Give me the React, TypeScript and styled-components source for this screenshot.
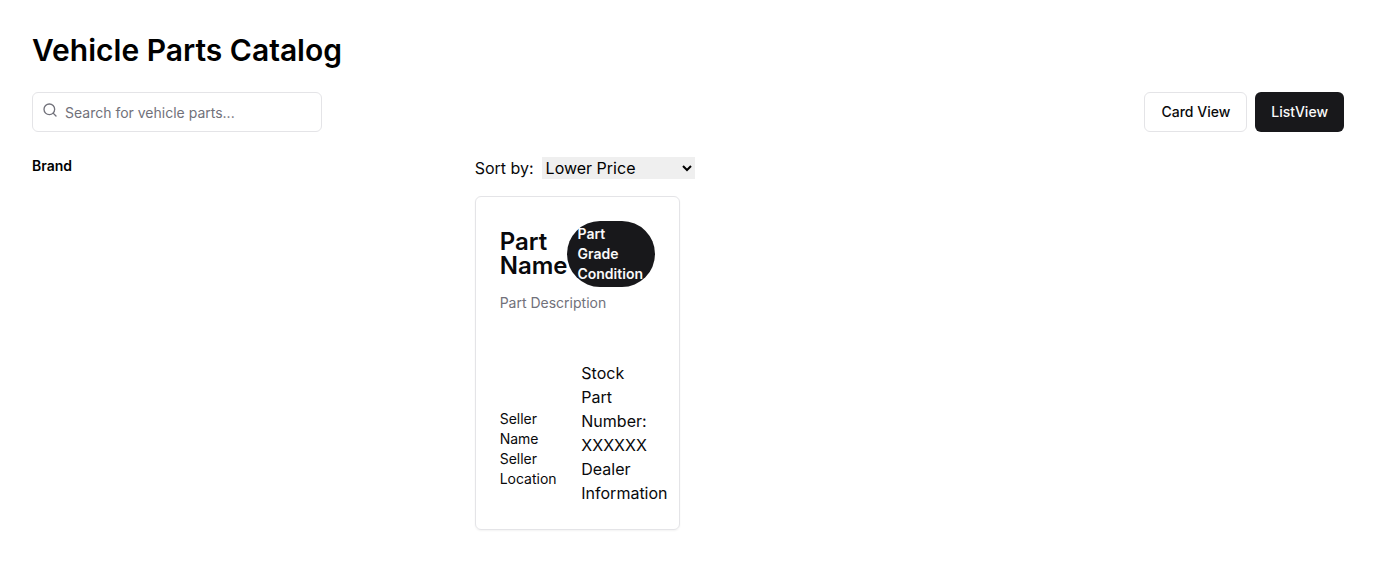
import React, { useState } from "react";
import styled, { createGlobalStyle } from "styled-components";
import { Search } from "lucide-react";

const GlobalStyle = createGlobalStyle`
  *, *::before, *::after { box-sizing: border-box; }
  body {
    margin: 0;
    background: #fff;
    color: #09090b;
    font-family: Inter, "Liberation Sans", sans-serif;
    font-size: 16px;
    line-height: 24px;
  }
  h1, h2, h3, p { margin: 0; }
  button, input, select { font-family: inherit; }
`;

const Page = styled.main`
  padding: 32px;
`;

const PageTitle = styled.h1`
  margin-bottom: 24px;
  color: #000;
  font-size: 30px;
  line-height: 36px;
  font-weight: 600;
`;

const Toolbar = styled.div`
  display: flex;
  align-items: center;
  justify-content: space-between;
  gap: 16px;
  margin-bottom: 24px;
`;

const SearchBox = styled.label`
  display: flex;
  align-items: flex-start;
  gap: 7px;
  width: 290px;
  height: 40px;
  padding: 0 12px 0 9px;
  border: 1px solid #e4e4e7;
  border-radius: 6px;
  color: #71717a;

  svg {
    flex: none;
    margin-top: 9px;
  }
`;

const SearchInput = styled.input`
  flex: 1;
  min-width: 0;
  height: 38px;
  padding: 0;
  border: 0;
  outline: 0;
  background: transparent;
  color: #09090b;
  font-size: 14px;
  line-height: 20px;

  &::placeholder { color: #71717a; }
`;

const ViewButtons = styled.div`
  display: flex;
  gap: 8px;
`;

const ViewButton = styled.button<{ $filled?: boolean }>`
  height: 40px;
  padding: 0 16px;
  border: ${(p) => (p.$filled ? "0" : "1px solid #e4e4e7")};
  border-radius: 6px;
  background: ${(p) => (p.$filled ? "#18181b" : "#fff")};
  color: ${(p) => (p.$filled ? "#fafafa" : "#09090b")};
  font-size: 14px;
  line-height: 20px;
  font-weight: 500;
  cursor: pointer;
`;

const Columns = styled.div`
  display: grid;
  grid-template-columns: repeat(3, minmax(0, 1fr));
  gap: 16px;
`;

const FilterTitle = styled.h2`
  color: #000;
  font-size: 14px;
  line-height: 20px;
  font-weight: 600;
`;

const Results = styled.section`
  grid-column: span 2;
`;

const SortRow = styled.div`
  display: flex;
  align-items: center;
  gap: 8px;
  margin-bottom: 16px;
`;

const SortSelect = styled.select`
  width: 153px;
  height: 22px;
  padding: 0;
  border: 0;
  border-radius: 0;
  background-color: #efefef;
  color: #000;
  font-size: 16px;
`;

const CardGrid = styled.div`
  display: grid;
  grid-template-columns: repeat(4, minmax(0, 1fr));
  gap: 16px;
`;

const Card = styled.article`
  display: flex;
  flex-direction: column;
  gap: 48px;
  padding: 24px;
  border: 1px solid #e4e4e7;
  border-radius: 6px;
  box-shadow: 0 1px 2px rgba(0, 0, 0, 0.05);
`;

const CardHeader = styled.header`
  display: flex;
  flex-direction: column;
  gap: 6px;
`;

const TitleRow = styled.div`
  display: flex;
  align-items: center;
  justify-content: space-between;
`;

const CardTitle = styled.h3`
  font-size: 24px;
  line-height: 24px;
  font-weight: 600;
`;

const Badge = styled.span`
  padding: 3px 10px;
  border-radius: 999px;
  background: #18181b;
  color: #fafafa;
  font-size: 14px;
  line-height: 20px;
  font-weight: 600;
`;

const Description = styled.p`
  color: #71717a;
  font-size: 14px;
  line-height: 20px;
`;

const Details = styled.div`
  display: grid;
  grid-template-columns: repeat(2, minmax(0, 1fr));
  align-items: center;
  gap: 8px;
`;

const Seller = styled.div`
  padding-top: 32px;
  font-size: 14px;
  line-height: 20px;
`;

export default function App() {
  const [query, setQuery] = useState("");
  return (
    <>
      <GlobalStyle />
      <Page>
        <PageTitle>Vehicle Parts Catalog</PageTitle>
        <Toolbar>
          <SearchBox>
            <Search size={16} aria-hidden="true" />
            <SearchInput
              type="text"
              aria-label="Search for vehicle parts"
              placeholder="Search for vehicle parts..."
              value={query}
              onChange={(e) => setQuery(e.target.value)}
            />
          </SearchBox>
          <ViewButtons>
            <ViewButton type="button">Card View</ViewButton>
            <ViewButton type="button" $filled>ListView</ViewButton>
          </ViewButtons>
        </Toolbar>
        <Columns>
          <aside>
            <FilterTitle>Brand</FilterTitle>
          </aside>
          <Results>
            <SortRow>
              <label htmlFor="sort">Sort by:</label>
              <SortSelect id="sort" defaultValue="lower">
                <option value="lower">Lower Price</option>
                <option value="higher">Higher Price</option>
              </SortSelect>
            </SortRow>
            <CardGrid>
              <Card>
                <CardHeader>
                  <TitleRow>
                    <CardTitle>Part Name</CardTitle>
                    <Badge>Part Grade Condition</Badge>
                  </TitleRow>
                  <Description>Part Description</Description>
                </CardHeader>
                <Details>
                  <Seller>
                    <p>Seller Name</p>
                    <p>Seller Location</p>
                  </Seller>
                  <div>
                    <p>Stock</p>
                    <p>Part Number: XXXXXX</p>
                    <p>Dealer Information</p>
                  </div>
                </Details>
              </Card>
            </CardGrid>
          </Results>
        </Columns>
      </Page>
    </>
  );
}
